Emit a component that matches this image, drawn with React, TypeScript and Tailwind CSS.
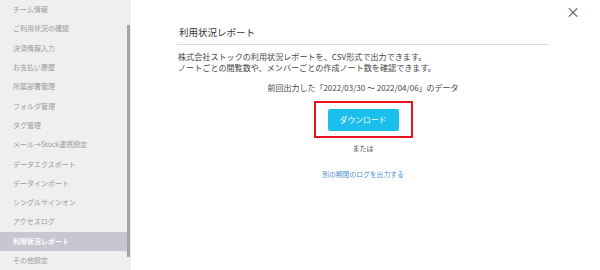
import React from "react";

const menuItems = [
  "チーム情報",
  "ご利用状況の確認",
  "決済情報入力",
  "お支払い履歴",
  "所属部署管理",
  "フォルダ管理",
  "タグ管理",
  "メール→Stock連携設定",
  "データエクスポート",
  "データインポート",
  "シングルサインオン",
  "アクセスログ",
  "利用状況レポート",
  "その他設定",
];

const font = { fontFamily: '"Noto Sans CJK JP", "Noto Sans", sans-serif' };

export default function App() {
  return (
    <div className="flex h-[270px] w-[600px] overflow-hidden bg-white" style={font}>
      {/* sidebar */}
      <div className="relative w-[131px] shrink-0 bg-[#efefef]">
        <div className="flex flex-col">
          {menuItems.map((item) => {
            const active = item === "利用状況レポート";
            return (
              <div
                key={item}
                className={`flex h-[19.3px] items-center pl-[13px] text-[7px] leading-none ${
                  active ? "mr-[4px] bg-[#c6c7d1] font-bold text-white" : "text-[#9a9a9a]"
                }`}
              >
                {item}
              </div>
            );
          })}
        </div>
        <div className="absolute right-[1px] top-[25px] h-[232px] w-[3px] bg-[#a3a3a3]" />
      </div>

      {/* main */}
      <div className="relative flex-1">
        <button className="absolute right-[20px] top-[4px] text-[14px] leading-none text-[#555]">×</button>
        <div className="ml-[46px] mr-[51px] pt-[28px]">
          <div className="pl-[2px] text-[9.5px] leading-none text-[#333]">利用状況レポート</div>
          <div className="mt-[6px] h-px bg-[#d9d9d9]" />
          <div className="mt-[6px] pl-[1px] text-[8.1px] leading-[11px] text-[#444]">
            <div>株式会社ストックの利用状況レポートを、CSV形式で出力できます。</div>
            <div>ノートごとの閲覧数や、メンバーごとの作成ノート数を確認できます。</div>
          </div>
          <div className="mt-[11.5px] flex justify-center text-[8px] leading-none text-[#444]">
            前回出力した「2022/03/30 ～ 2022/04/06」のデータ
          </div>
          <div className="mt-[9px] flex justify-center">
            <div className="flex h-[37px] w-[99px] items-center justify-center border-[2px] border-[#e8141c]">
              <div className="flex h-[22px] w-[71px] items-center justify-center rounded-[2px] bg-[#1bbfee] text-[7.8px] text-white">
                ダウンロード
              </div>
            </div>
          </div>
          <div className="mt-[6.5px] flex justify-center text-[7px] leading-none text-[#555]">または</div>
          <div className="mt-[19.5px] flex justify-center text-[6.8px] leading-none text-[#4d8fd0]">
            別の期間のログを出力する
          </div>
        </div>
      </div>
    </div>
  );
}
